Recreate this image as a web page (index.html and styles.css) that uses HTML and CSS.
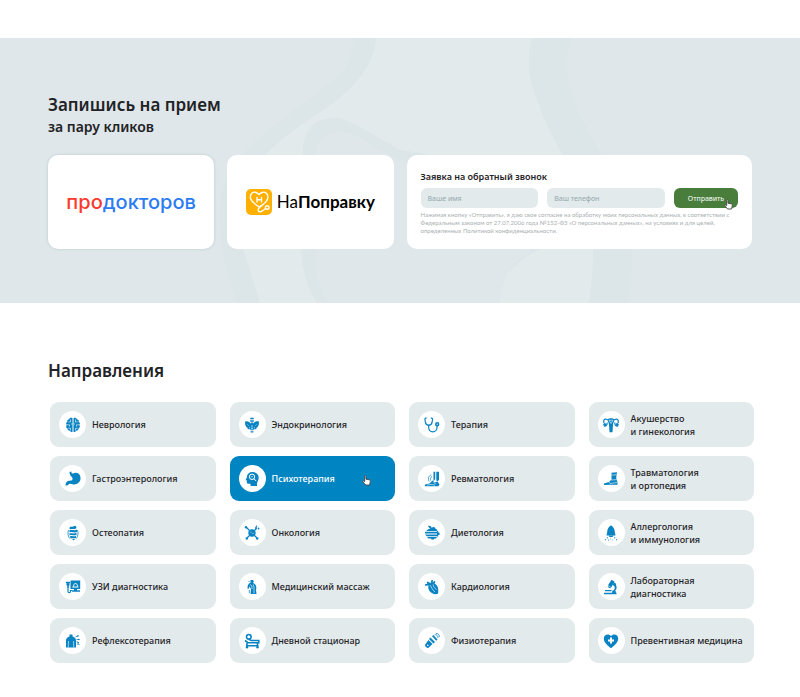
FILE: index.html
```html
<!DOCTYPE html>
<html lang="ru">
<head>
    <meta charset="UTF-8">
    <meta name="viewport" content="width=device-width, initial-scale=1.0">
    <title>Запись на прием</title>
    <link rel="stylesheet" href="styles.css">
</head>
<body>

<!-- Booking banner -->
<section class="booking">
    <svg class="booking-bg" viewBox="0 0 800 265" preserveAspectRatio="xMidYMid slice" aria-hidden="true">
        <path fill="#e2eaeb" d="M376 0C374 25 358 46 333 65C305 85 283 97 265 117C234 150 234 180 243 211L260 265H589C594 235 595 190 590 170C582 145 550 100 540 69C528 40 526 25 532 0Z"/>
        <path fill="#dce5e8" d="M353 0C353 22 345 35 327 47C300 70 270 87 247 112C225 134 220 150 220 175C220 205 225 235 237 265H260L243 211C234 180 234 150 265 117C283 97 305 85 333 65C358 46 374 25 376 0Z"/>
        <path fill="#dce5e8" d="M532 0C526 25 528 40 540 69C550 100 582 145 590 170C595 190 594 235 589 265H628C633 235 633 200 630 165C622 145 585 95 577 69C565 40 564 25 572 0Z"/>
        <path fill="#dce5e8" d="M303 117C302 95 312 80 333 80C347 80 358 88 370 95L400 112L520 130L545 210C520 220 495 240 494 265H317C305 245 300 225 302 200Z"/>
        <path fill="#dfe7ea" d="M315 117C317 103 325 95 340 94C350 94 360 100 372 107L400 122L500 150L532 215C510 225 501 240 500 265H328C318 250 313 230 317 205Z"/>
        <path fill="#e2eaeb" d="M541 211C515 222 501 240 501 265H560V211Z"/>
    </svg>

    <div class="container">
        <h1 class="booking-title">Запишись на прием</h1>
        <p class="booking-subtitle">за пару кликов</p>

        <div class="booking-cards">
            <a href="#" class="card partner partner-shadow">
                <span class="prodoctorov"><span class="red">про</span>докторов</span>
            </a>

            <a href="#" class="card partner">
                <svg class="napopravku-icon" viewBox="0 0 26 26" aria-hidden="true">
                    <rect width="26" height="26" rx="5" fill="#ffb000"/>
                    <g fill="none" stroke="#fff" stroke-width="1.4" stroke-linecap="round" stroke-linejoin="round">
                        <path d="M10 3.500C7 2.300 4.300 4.500 4.300 8C4.300 12 8.500 15 13.300 18C18.500 15 21.800 12 22 8C22 4.500 19 2.300 16 3.500M10 3.500C11.500 4 12.300 4.700 13 5.700C13.700 4.700 14.500 4 16 3.500"/>
                        <path d="M16 16.300C12.500 18.700 11.500 20.500 12.500 22C14 24 17 21.500 19.500 19.500"/>
                        <circle cx="21.200" cy="18.500" r="1.800"/>
                        <path d="M11 8.500V13M15.500 8.500V13M11 10.700H15.500"/>
                    </g>
                </svg>
                <span class="napopravku">На<b>Поправку</b></span>
            </a>

            <form class="card callback">
                <h2 class="callback-title">Заявка на обратный звонок</h2>
                <div class="callback-row">
                    <input type="text" name="name" placeholder="Ваше имя" aria-label="Ваше имя">
                    <input type="tel" name="phone" placeholder="Ваш телефон" aria-label="Ваш телефон">
                    <button type="button">
                        Отправить
                        <svg class="hand" viewBox="0 0 10 12" aria-hidden="true">
                            <path d="M3 1.200C3 .3 4.400 .3 4.400 1.200V4.500L8 5.200C9 5.500 9.300 6 9.200 7L8.500 11H4L1 7.500C.5 6.700 1.300 6 2 6.500L3 7.300Z"/>
                        </svg>
                    </button>
                </div>
                <p class="callback-note">Нажимая кнопку «Отправить», я даю свое согласие на обработку моих персональных данных, в соответствии с<br>Федеральным законом от 27.07.2006 года №152-ФЗ «О персональных данных», на условиях и для целей,<br>определенных Политикой конфиденциальности.</p>
            </form>
        </div>
    </div>
</section>

<!-- Directions -->
<section class="directions">
    <h2 class="directions-title">Направления</h2>

    <div class="directions-grid">
        <a href="#" class="direction">
            <span class="icon"><svg viewBox="0 0 16 16">
                <path d="M7.500 1.200C6 .3 4.500 1 4.200 2.200C2.800 2.300 2 3.500 2.300 4.700C1 5.500 .8 7 1.500 8C.8 9.500 1.300 11 2.500 11.600C2.500 13 3.600 14 5 13.800C5.500 15 6.700 15.300 7.500 14.800ZM8.500 1.200C10 .3 11.500 1 11.800 2.200C13.200 2.300 14 3.500 13.700 4.700C15 5.500 15.200 7 14.500 8C15.200 9.500 14.700 11 13.500 11.600C13.500 13 12.400 14 11 13.800C10.500 15 9.300 15.300 8.500 14.800Z"/>
                <path class="cut" d="M5.500 2.500V5H3.300M1 7.800H4.500V9.500M7.500 7H6M5.500 13.500V11.300H3.300M10.500 2.500V5H12.700M15 7.800H11.500V9.500M8.500 7H10M10.500 13.500V11.300H12.700"/>
            </svg></span>
            Неврология
        </a>
        <a href="#" class="direction">
            <span class="icon"><svg viewBox="0 0 16 16">
                <path d="M6.200 .8H9.800V2.200H6.200ZM6.200 3.200H9.800V4.800H6.200ZM7 5.500H9V8H7ZM6.200 12.200H9.800V13.300H6.200ZM6.600 14.200H9.400V15.500H6.600Z"/>
                <path d="M1.200 4.500C3.500 3.800 6.700 5.300 7.700 8V11.500C6 13 3.500 12.500 3.200 10.500C1.500 9.500 .7 7 1.200 4.500ZM14.800 4.500C12.500 3.800 9.300 5.300 8.300 8V11.500C10 13 12.500 12.500 12.800 10.500C14.500 9.500 15.300 7 14.800 4.500Z"/>
                <path class="cut" d="M3.500 7.500L4.500 8.500M5 10.800H6M12.500 7.500L11.500 8.500M11 10.800H10"/>
            </svg></span>
            Эндокринология
        </a>
        <a href="#" class="direction">
            <span class="icon"><svg viewBox="0 0 16 16">
                <path class="line" d="M2.700 1.200H1.800C1 1.200 .8 2 1 3L1.500 5.500C2 7.700 3.200 8.200 4.700 8.200S7.500 7.700 8 5.500L8.500 3C8.700 2 8.500 1.200 7.700 1.200H6.800M4.700 8.200V10.500C4.700 13 6.300 14.800 8.700 14.800S13 13 13 10.800V8.800"/>
                <circle class="line bold" cx="13.200" cy="7.200" r="1.400"/>
            </svg></span>
            Терапия
        </a>
        <a href="#" class="direction">
            <span class="icon"><svg viewBox="0 0 16 16">
                <path d="M4.500 2.500C6 .9 10 .9 11.500 2.500L10 7.500L9.500 15.300H6.500L6 7.500Z"/>
                <path class="line" d="M6 3.500C3.500 2 1.300 1.500 .8 3.500V6M10 3.500C12.500 2 14.700 1.500 15.200 3.500V6M.8 9C3 9.500 4.700 8 4 5.500M15.200 9C13 9.500 11.300 8 12 5.500"/>
                <circle cx="1.800" cy="7.500" r="1.500"/><circle cx="14.200" cy="7.500" r="1.500"/>
                <path class="cut" d="M6 3.200H10L8 6.500Z"/>
            </svg></span>
            <span>Акушерство<br>и гинекология</span>
        </a>

        <a href="#" class="direction">
            <span class="icon"><svg viewBox="0 0 16 16">
                <path d="M4.500 .9L6.300 .5C6.300 2 7 2.800 8.200 2.500C10.500 .9 15 1.700 15.500 6.500C15.900 11.500 11.500 14.300 7.500 13.200C5.500 12.600 4 12 2.500 14.500H.5C.5 11.500 2 9.700 4.500 9.700C7.500 9.800 8.500 8 6.800 6C5.300 4.500 4.500 3 4.500 .9Z"/>
            </svg></span>
            Гастроэнтерология
        </a>
        <a href="#" class="direction active">
            <span class="icon"><svg viewBox="0 0 16 16">
                <path d="M8.500 1C12.500 1 14.700 3.500 14.700 6.700C14.700 9.500 13 10.500 13 12.500V15H6.500V12.800H4.500C3.300 12.800 2.800 12 2.800 11V9.300H1.500L3 6C3 3 5.500 1 8.500 1Z"/>
                <circle class="cut wide" cx="8" cy="5.800" r="2.700"/>
                <path class="cut wide" d="M10 7.800L12.200 10"/>
                <path class="cut" d="M6.700 5.800H9"/>
            </svg></span>
            Психотерапия
            <svg class="hand" viewBox="0 0 10 12" aria-hidden="true">
                <path d="M3 1.200C3 .3 4.400 .3 4.400 1.200V4.500L8 5.200C9 5.500 9.300 6 9.200 7L8.500 11H4L1 7.500C.5 6.700 1.300 6 2 6.500L3 7.300Z"/>
            </svg>
        </a>
        <a href="#" class="direction">
            <span class="icon"><svg viewBox="0 0 16 16">
                <path d="M9.500 .8H11.200V8L9.500 10.500ZM12.300 .8H15V9L13 10.500L12.300 9Z"/>
                <path d="M8.500 9.500L10.500 11.500L13.500 10.500L15.500 13.500L14.500 15.300H1C.5 14.300 1 13.500 2 13.200L5.500 12.500Z"/>
                <path class="cut" d="M3 14.200L7 13.300L11 14.200M9.500 11.500L12 13"/>
                <path class="line thin" d="M7.300 4C4.500 4.500 3.800 8 5 10.500M8 5.500C6.500 6.500 6 8 6.700 9.500"/>
            </svg></span>
            Ревматология
        </a>
        <a href="#" class="direction">
            <span class="icon"><svg viewBox="0 0 16 16">
                <path d="M8.500 1.800L14 1.200L13.200 6.500C13.200 8.500 14.500 10 14.500 12V13.800H7L1 14C.6 13 1.200 12.200 2.500 12L6 11L8.500 8.500Z"/>
                <path class="cut" d="M8.500 4.200L13.500 3.700M8 9L13.500 8.700M6 11L7 12.500L14 11.500"/>
            </svg></span>
            <span>Травматология<br>и ортопедия</span>
        </a>

        <a href="#" class="direction">
            <span class="icon"><svg viewBox="0 0 16 16">
                <path d="M5.500 1.500C7 2.500 9.500 .2 11 1.300L11.500 3C9.500 5.200 7 3 5 4.500L4.300 3ZM4.500 5.200C7 4.300 9.500 6 12 4.500V6.700C9.500 8.500 7 6 4.500 7.500ZM4.500 8.300C7 8 9.500 9 11.500 7.700V10C9.500 11 6.500 9.300 4.500 10.500ZM5 11.300C7 10.500 9.500 12 11 11V13C9 14 7 12.500 5.500 13.500ZM7 14H10L8.700 15.500Z"/>
                <path class="line thin" d="M3.500 5C2.500 8 3 11.500 4.700 13.500M12.500 5C13.500 8 13 11.500 11.300 13.500"/>
            </svg></span>
            Остеопатия
        </a>
        <a href="#" class="direction">
            <span class="icon"><svg viewBox="0 0 16 16">
                <circle cx="8" cy="8" r="3.700"/>
                <path class="line" d="M5.500 5.500L2.500 2.500M10.500 5.500L12.500 3.500M5.500 10.500L3 13M10.500 10.500L13 13"/>
                <circle cx="2" cy="2.200" r="1.200"/><circle cx="12" cy="3" r="1.100"/><circle cx="14.500" cy="3.500" r=".9"/><circle cx="12.500" cy="1.200" r=".8"/><circle cx="2.800" cy="13.500" r="1.200"/><circle cx="13.200" cy="13.500" r="1.200"/>
                <circle cx="7" cy="7" r=".5" fill="#fff"/><circle cx="9" cy="8.500" r=".5" fill="#fff"/>
            </svg></span>
            Онкология
        </a>
        <a href="#" class="direction">
            <span class="icon"><svg viewBox="0 0 16 16">
                <path d="M4 1C6 .5 7.500 1.500 7.700 3C9 1.500 11 2 11.300 3.500C12.500 4 13.200 4.800 13.500 6H2.500C3 4.500 4.500 3.500 6.500 3.700C5.500 3 4.500 2.200 4 1ZM3 12H13L12 13.500H10.500L10 14.500H7.500L7 13.500H4.500Z"/>
                <path d="M1 6.700H13.500V8H1ZM1.500 9.700H13.500V11.200H2.500ZM13 6H14.200V7.500H15.500V10H14.200V11.500H13Z"/>
                <path class="line thin" d="M1 8.900H13"/>
            </svg></span>
            Диетология
        </a>
        <a href="#" class="direction">
            <span class="icon"><svg viewBox="0 0 16 16">
                <path d="M8 .3C10.200 1.500 11.800 4.500 11.800 7L12.500 10.500H3.500L4.200 7C4.200 4.500 5.800 1.500 8 .3Z"/>
                <path d="M5.500 10.500H10.500L9.500 12H6.500Z"/>
                <path class="line" d="M4.700 12.500L4 13.200M2.800 14.300L2.200 15M7 14H7.500M9.500 15H10M11.300 12.500L12 13.200M13.200 14.300L13.800 15M5.300 15.200H6"/>
            </svg></span>
            <span>Аллергология<br>и иммунология</span>
        </a>

        <a href="#" class="direction">
            <span class="icon"><svg viewBox="0 0 16 16">
                <path d="M5.500 1.500H15.200V10H5.500ZM1.500 4H4.500V6.500H1.500ZM2.200 6.500H3.800V9.500H2.200ZM.8 2.800H5V4H.8ZM7 11.200H15V12.700H7ZM9 10H12V11.200H9Z"/>
                <path class="cut wide" d="M7.300 8H13.500M8.500 7.500C8.500 3.500 12.500 3.500 12.500 7.500"/>
                <path class="line" d="M3 9.500V12.500C3 14 5.500 14 5.500 12.500V11.500H7"/>
            </svg></span>
            УЗИ диагностика
        </a>
        <a href="#" class="direction">
            <span class="icon"><svg viewBox="0 0 16 16">
                <path d="M6.500 1H8.500C10 1.300 10.200 3 9 3.800L11 5.200C12.500 6.500 12.500 9 12 11L12.500 15H6.500L7 10L5.500 7.500L4.500 10L3.500 9.500C3.500 7 4 4.500 6.500 3.800Z"/>
                <path class="cut" d="M6 5.500L8 7V10M9.300 5.500L10 8.500V14.500"/>
                <path class="line thin" d="M5.500 2L4.500 3M5.300 11V14"/>
            </svg></span>
            Медицинский массаж
        </a>
        <a href="#" class="direction">
            <span class="icon"><svg viewBox="0 0 16 16">
                <path d="M6.500 4.200L7.500 1H9L8.700 3.500L10.500 1.800L11.500 3L10.500 4.500C13.500 6 15 9.500 14 14.500C12 16 7.500 14.800 5.500 12C4.500 10.500 4 8.500 4.500 6.500L1 6.800V5.300L3.500 4.800L2.500 3.500L3.800 2.500Z"/>
                <path class="cut" d="M6 6C7.500 8 8 10.500 11 13M9 5.500C9.500 8 11 9.500 12.500 10.500"/>
            </svg></span>
            Кардиология
        </a>
        <a href="#" class="direction">
            <span class="icon"><svg viewBox="0 0 16 16">
                <path d="M8.500 .7L11.700 2.700L8.300 8.200L5 6.200ZM5.500 7L8 8.600L7.300 9.600L4.900 8.100ZM11.500 5C14.500 6.500 14.300 10.500 11.500 12H9.700C12 10.500 12.500 8 10.500 6.500Z"/>
                <path d="M1 13.700H13.500V15.300H1ZM2 11H8.500V12.200H2ZM9.500 11.500H12.500L13 14H9Z"/>
                <circle cx="11.500" cy="5.300" r="1.500"/>
            </svg></span>
            <span>Лабораторная<br>диагностика</span>
        </a>

        <a href="#" class="direction">
            <span class="icon"><svg viewBox="0 0 16 16">
                <path d="M4.500 1.500H7.500V3.500C9.500 4 11 5.500 11 7.500V14.500H1V7.500C1 5.500 2.500 4 4.500 3.500Z"/>
                <path class="cut" d="M3.500 8L3.200 14.500M8.500 8L8.800 14.500"/>
                <path class="line thin" d="M10.500 4L13.500 2.500M11.500 6.500H14.500M11.500 8.500L14 10M11.800 11L14.500 11.500"/>
                <circle cx="12.800" cy="3" r=".8"/><circle cx="13.800" cy="6.500" r=".8"/><circle cx="13.200" cy="9.700" r=".8"/>
            </svg></span>
            Рефлексотерапия
        </a>
        <a href="#" class="direction">
            <span class="icon"><svg viewBox="0 0 16 16">
                <circle class="line bold" cx="4.800" cy="3.800" r="2.300"/>
                <path class="line bold" d="M1 7.500L4 9.700H14.800V7.500H7.500L5 6.500M2 12.700H14.500M3 10V14M13.500 10V14"/>
                <circle cx="3" cy="14.300" r="1.200"/><circle cx="13.500" cy="14.300" r="1.200"/>
            </svg></span>
            Дневной стационар
        </a>
        <a href="#" class="direction">
            <span class="icon"><svg viewBox="0 0 16 16">
                <path d="M6.500 4.500L11 9L9.500 10.500L5 6ZM8 3.300L9.300 2L13.500 6.500L12.200 7.800ZM4.500 7L8.500 11L4.500 14.700C3 15.500 .5 13.500 1.200 11.500Z"/>
                <circle cx="3.700" cy="12.200" r=".8" fill="#fff"/>
                <path class="line thin" d="M10.500 2C12 1 14.500 3 13.800 5M12 .5C14 .2 15.700 2 15.300 4"/>
            </svg></span>
            Физиотерапия
        </a>
        <a href="#" class="direction">
            <span class="icon"><svg viewBox="0 0 16 16">
                <path d="M8 3C6 .3 .8 1 .8 5.500C.8 9.500 4.500 12.500 8 15.200C11.500 12.500 15.200 9.500 15.200 5.500C15.200 1 10 .3 8 3Z"/>
                <path d="M8 4.500V10.500M5 7.500H11" fill="none" stroke="#fff" stroke-width="2"/>
            </svg></span>
            Превентивная медицина
        </a>
    </div>
</section>

</body>
</html>
```
FILE: styles.css
```css
* {
    box-sizing: border-box;
}

body {
    margin: 0;
    padding-top: 38px;
    font-family: "Noto Sans", "Open Sans", sans-serif;
    color: #1f2326;
    background-color: #fff;
}

h1,
h2,
p {
    margin: 0;
}

a {
    color: inherit;
    text-decoration: none;
}

/* Booking banner */
.booking {
    position: relative;
    padding: 55px 0 54px;
    background-color: #dfe7ea;
}

.booking-bg {
    position: absolute;
    inset: 0;
    width: 100%;
    height: 100%;
}

.container {
    position: relative;
    padding: 0 48px;
}

.booking-title,
.directions-title {
    font-size: 17px;
    font-weight: 600;
    line-height: 24px;
}

.booking-subtitle {
    margin-bottom: 18px;
    font-size: 14px;
    font-weight: 600;
    line-height: 20px;
}

.booking-cards {
    display: grid;
    grid-template-columns: repeat(4, 1fr);
    gap: 13px;
}

.card {
    min-height: 94px;
    border-radius: 10px;
    background-color: #fff;
}

.partner {
    display: flex;
    align-items: center;
    justify-content: center;
    gap: 5px;
}

.partner-shadow {
    box-shadow: 0 0 3px rgba(110, 150, 160, 0.35);
}

.prodoctorov {
    font-family: Inter, sans-serif;
    font-size: 20px;
    font-weight: 500;
    line-height: 24px;
    color: #2b7bf3;
}

.prodoctorov .red {
    color: #f93a2c;
}

.napopravku-icon {
    width: 26px;
    height: 26px;
}

.napopravku {
    font-family: Lato, sans-serif;
    font-size: 17px;
    line-height: 24px;
    color: #000;
}

.callback {
    grid-column: span 2;
    padding: 15px 14px 13px;
}

.callback-title {
    margin-bottom: 4px;
    font-size: 9px;
    font-weight: 600;
    line-height: 14px;
}

.callback-row {
    display: flex;
    gap: 9px;
}

.callback-row input,
.callback-row button {
    height: 20px;
    border: none;
    border-radius: 6px;
    font-family: inherit;
    font-size: 7px;
}

.callback-row input {
    flex: 1;
    min-width: 0;
    padding: 0 7px;
    background-color: #e2eaec;
}

.callback-row input::placeholder {
    color: #94a7ab;
}

.callback-row button {
    position: relative;
    width: 64px;
    padding: 0;
    background-color: #497d3b;
    color: #fff;
    cursor: pointer;
}

.hand {
    position: absolute;
    width: 9px;
    height: 11px;
    fill: #fff;
    stroke: #444;
    stroke-width: 1;
}

.callback-row .hand {
    right: 5px;
    bottom: -2px;
}

.callback-note {
    margin-top: 3px;
    font-family: Lato, sans-serif;
    font-size: 6px;
    line-height: 8px;
    color: #a9afb1;
    white-space: nowrap;
}

/* Directions */
.directions {
    padding: 56px 46px 33px 50px;
}

.directions-title {
    margin: 0 0 19px -2px;
}

.directions-grid {
    display: grid;
    grid-template-columns: repeat(4, 1fr);
    gap: 9px 14px;
}

.direction {
    position: relative;
    display: flex;
    align-items: center;
    gap: 6px;
    min-height: 45px;
    padding: 0 9px;
    border-radius: 9px;
    background-color: #e2eaec;
    font-size: 9px;
    font-weight: 500;
    line-height: 13px;
    white-space: nowrap;
}

.direction.active {
    background-color: #0085c3;
    color: #fff;
}

.direction .hand {
    right: 24px;
    top: 19px;
}

.icon {
    display: flex;
    flex-shrink: 0;
    align-items: center;
    justify-content: center;
    width: 27px;
    height: 27px;
    border-radius: 50%;
    background-color: #fff;
}

.icon svg {
    width: 16px;
    height: 16px;
    fill: #0a83c3;
}

.icon .line {
    fill: none;
    stroke: #0a83c3;
    stroke-width: 1.2;
}

.icon .thin {
    stroke-width: 0.8;
}

.icon .bold {
    stroke-width: 1.6;
}

.icon .cut {
    fill: none;
    stroke: #fff;
    stroke-width: 0.6;
}

.icon .wide {
    stroke-width: 1;
}
```
